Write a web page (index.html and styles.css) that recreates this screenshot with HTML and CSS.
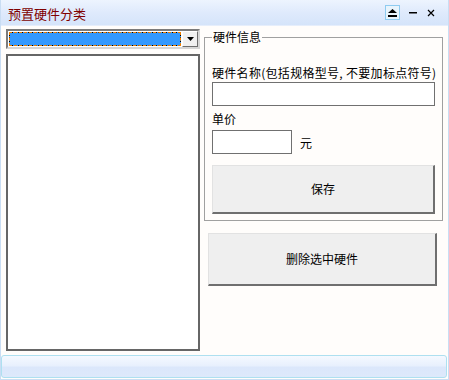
FILE: index.html
```html
<!DOCTYPE html>
<html lang="zh">
<head>
<meta charset="utf-8">
<title>预置硬件分类</title>
<link rel="stylesheet" href="styles.css">
</head>
<body>
<div class="window">
  <div class="titlebar">
    <span class="title">预置硬件分类</span>
    <div class="ctrls">
      <span class="ctrl eject">
        <svg width="9" height="8" viewBox="0 0 9 8"><polygon points="4.5,0 9,4 0,4" fill="#000"/><rect x="0" y="6" width="9" height="2" fill="#000"/></svg>
      </span>
      <span class="ctrl min">
        <svg width="8" height="2" viewBox="0 0 8 2"><rect width="8" height="1.5" fill="#000"/></svg>
      </span>
      <span class="ctrl close">
        <svg width="8" height="8" viewBox="0 0 8 8"><path d="M1 1L7 7M7 1L1 7" stroke="#000" stroke-width="1.2"/></svg>
      </span>
    </div>
  </div>
  <div class="body">
    <div class="left">
      <div class="combo">
        <div class="combo-sel"></div>
        <div class="combo-btn">
          <svg width="7" height="4" viewBox="0 0 7 4"><polygon points="0,0 7,0 3.5,4" fill="#000"/></svg>
        </div>
      </div>
      <div class="list"></div>
    </div>
    <div class="right">
      <fieldset class="group">
        <legend class="legend">硬件信息</legend>
        <div class="label name-label">硬件名称(包括规格型号, 不要加标点符号)</div>
        <div class="input wide"></div>
        <div class="label price-label">单价</div>
        <div class="price-row">
          <div class="input small"></div>
          <span class="label unit">元</span>
        </div>
        <button class="btn save">保存</button>
      </fieldset>
      <button class="btn delete">删除选中硬件</button>
    </div>
  </div>
  <div class="status"></div>
</div>
</body>
</html>
```

FILE: styles.css
```css
* { box-sizing: border-box; }
html, body { margin: 0; padding: 0; }
body {
  width: 449px;
  height: 380px;
  font-family: "Noto Sans CJK SC", "DejaVu Sans", sans-serif;
  font-size: 12px;
  color: #000;
  background: #fff;
}
.window {
  width: 449px;
  height: 380px;
  display: flex;
  flex-direction: column;
  background: #fffdfb;
  border-left: 1px solid #c9ddf3;
  border-right: 1px solid #c9ddf3;
  border-bottom: 1px solid #c9ddf3;
}
.titlebar {
  height: 26px;
  flex: none;
  display: flex;
  align-items: center;
  justify-content: space-between;
  background: linear-gradient(#edf4fe 0%, #dfeafc 50%, #d5e4fa 100%);
  border-bottom: 1px solid #e6eefb;
  padding: 0 0 0 7px;
}
.title {
  color: #800000;
  font-size: 13px;
  line-height: 15px;
  margin-top: 1px;
}
.ctrls {
  display: flex;
  align-items: center;
  height: 100%;
  padding-right: 12px;
}
.ctrl {
  display: flex;
  align-items: center;
  justify-content: center;
}
.eject {
  width: 15px;
  height: 15px;
  border: 1px solid #8ecbf0;
  background: #e8f4fc;
  margin-right: 8px;
}
.min { width: 10px; margin-right: 8px; margin-top: 1px; }
.close { width: 10px; }
.body {
  flex: 1;
  display: flex;
  padding: 3px 7px 4px 5px;
  gap: 4px;
}
.left {
  width: 194px;
  flex: none;
  display: flex;
  flex-direction: column;
  gap: 5px;
}
.combo {
  height: 20px;
  flex: none;
  display: flex;
  align-items: stretch;
  border-top: 2px solid #7b7b7b;
  border-left: 2px solid #7b7b7b;
  border-bottom: 2px solid #d6d6d6;
  border-right: 2px solid #d6d6d6;
  background: #fff;
  padding: 1px 0 0 1px;
}
.combo-sel {
  flex: 1;
  background: #3399ff;
  border: 1px dotted #000;
  outline: 1px dashed #f08000;
  outline-offset: -1px;
  margin: 0 1px 1px 0;
}
.combo-btn {
  width: 16px;
  flex: none;
  background: #f0f0f0;
  border-top: 1px solid #fff;
  border-left: 1px solid #fff;
  border-right: 1px solid #6e6e6e;
  border-bottom: 1px solid #6e6e6e;
  display: flex;
  align-items: center;
  justify-content: center;
  margin-top: -1px;
}
.list {
  flex: 1;
  background: #fff;
  border: 2px solid #666;
}
.right {
  flex: 1;
  display: flex;
  flex-direction: column;
}
.group {
  margin: 1px 0 0 0;
  height: 191px;
  border: 1px solid #a0a0a0;
  padding: 22px 6px 0 7px;
  display: flex;
  flex-direction: column;
  min-width: 0;
}
.legend {
  padding: 0 1px;
  margin-left: 0;
  font-size: 12px;
  line-height: 14px;
}
.label {
  font-size: 12px;
  line-height: 14px;
}
.input {
  background: #fff;
  border: 1px solid #707070;
  height: 24px;
}
.name-label { margin-bottom: 2px; white-space: nowrap; letter-spacing: 0.3px; }
.wide { width: 223px; }
.price-label { margin-top: 6px; margin-bottom: 4px; }
.price-row {
  display: flex;
  align-items: center;
  gap: 8px;
}
.small { width: 80px; height: 24px; }
.unit { margin-top: 2px; }
.btn {
  font-family: inherit;
  font-size: 12px;
  line-height: 14px;
  color: #000;
  background: #efefef;
  border-top: 1px solid #e2e2e2;
  border-left: 1px solid #e2e2e2;
  border-right: 2px solid #6f6f6f;
  border-bottom: 2px solid #6f6f6f;
  padding: 0;
  margin: 0;
}
.save {
  width: 223px;
  height: 49px;
  margin-top: 11px;
}
.delete {
  width: 229px;
  height: 53px;
  margin: 12px 0 0 4px;
}
.status {
  height: 23px;
  flex: none;
  margin: 0 1px 1px 0;
  border: 1px solid #aee0f0;
  border-radius: 3px;
  background: linear-gradient(#f5f9ff 0%, #e8f0fd 45%, #dbe7fb 55%, #dde9fb 100%);
}
```
